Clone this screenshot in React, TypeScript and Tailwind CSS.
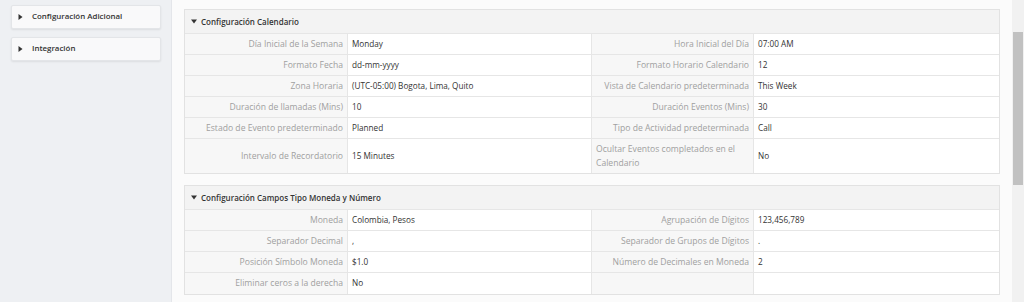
import React from "react";

type Row = [string, string, string, string];

const cal: Row[] = [
  ["Día Inicial de la Semana", "Monday", "Hora Inicial del Día", "07:00 AM"],
  ["Formato Fecha", "dd-mm-yyyy", "Formato Horario Calendario", "12"],
  ["Zona Horaria", "(UTC-05:00) Bogota, Lima, Quito", "Vista de Calendario predeterminada", "This Week"],
  ["Duración de llamadas (Mins)", "10", "Duración Eventos (Mins)", "30"],
  ["Estado de Evento predeterminado", "Planned", "Tipo de Actividad predeterminada", "Call"],
  ["Intervalo de Recordatorio", "15 Minutes", "Ocultar Eventos completados en el Calendario", "No"],
];

const cur: Row[] = [
  ["Moneda", "Colombia, Pesos", "Agrupación de Dígitos", "123,456,789"],
  ["Separador Decimal", ",", "Separador de Grupos de Dígitos", "."],
  ["Posición Símbolo Moneda", "$1.0", "Número de Decimales en Moneda", "2"],
  ["Eliminar ceros a la derecha", "No", "", ""],
];

function Tri({ down }: { down?: boolean }) {
  return down ? (
    <svg width="6" height="5" viewBox="0 0 6 5" className="shrink-0">
      <path d="M0 0.5 L6 0.5 L3 4.5 Z" fill="#333" />
    </svg>
  ) : (
    <svg width="5" height="6" viewBox="0 0 5 6" className="shrink-0">
      <path d="M0.5 0 L4.5 3 L0.5 6 Z" fill="#333" />
    </svg>
  );
}

function Panel({ title, rows, tallLast }: { title: string; rows: Row[]; tallLast?: boolean }) {
  return (
    <div className="border border-[#e2e2e2] bg-white">
      <div className="flex h-[24px] items-center gap-[4px] bg-[#f3f3f3] pl-[6px] border-b border-[#e6e6e6]">
        <Tri down />
        <span className="text-[8px] font-semibold text-[#333]">{title}</span>
      </div>
      <div className="grid grid-cols-[163px_244px_162px_1fr]">
        {rows.map((r, i) => {
          const tall = tallLast && i === rows.length - 1;
          const h = tall ? "h-[34px]" : "h-[21px]";
          const last = i === rows.length - 1;
          const bb = last ? "" : "border-b border-[#e6e6e6]";
          return (
            <React.Fragment key={i}>
              <div className={`${h} ${bb} flex items-center justify-end bg-[#f7f7f7] border-r border-[#e6e6e6] pr-[4px] text-[8.6px] text-[#a0a0a0]`}>
                {r[0]}
              </div>
              <div className={`${h} ${bb} flex items-center border-r border-[#e6e6e6] pl-[4px] text-[8.2px] text-[#333]`}>
                {r[1]}
              </div>
              <div
                className={`${h} ${bb} flex items-center bg-[#f7f7f7] border-r border-[#e6e6e6] px-[4px] text-[8.6px] leading-[14px] text-[#a0a0a0] ${
                  tall ? "justify-start" : "justify-end"
                }`}
              >
                {r[2]}
              </div>
              <div className={`${h} ${bb} flex items-center pl-[4px] text-[8.2px] text-[#333]`}>{r[3]}</div>
            </React.Fragment>
          );
        })}
      </div>
    </div>
  );
}

export default function App() {
  return (
    <div
      className="flex h-[302px] w-[1024px] overflow-hidden bg-[#fbfbfb]"
      style={{ fontFamily: '"Open Sans", "Noto Sans", sans-serif' }}
    >
      <aside className="flex w-[172px] shrink-0 flex-col gap-[8px] border-r border-[#e4e6ea] bg-[#eef0f3] pl-[11px] pr-[10px] pt-[5px]">
        {["Configuración Adicional", "Integración"].map((t) => (
          <div
            key={t}
            className="flex h-[24px] items-center gap-[9px] rounded-[2px] border border-[#e3e5e8] bg-[#f9f9fa] pl-[6px] shadow-[0_1px_2px_rgba(0,0,0,0.08)]"
          >
            <Tri />
            <span className="text-[7.9px] font-semibold text-[#333]">{t}</span>
          </div>
        ))}
      </aside>
      <main className="flex flex-1 flex-col gap-[11px] pl-[12px] pr-[12px] pt-[9px]">
        <Panel title="Configuración Calendario" rows={cal} tallLast />
        <Panel title="Configuración Campos Tipo Moneda y Número" rows={cur} />
      </main>
      <div className="relative w-[12px] shrink-0 bg-[#f1f1f1]">
        <div className="absolute left-[1px] right-[1px] top-[32px] h-[153px] bg-[#c1c1c1]" />
      </div>
    </div>
  );
}
